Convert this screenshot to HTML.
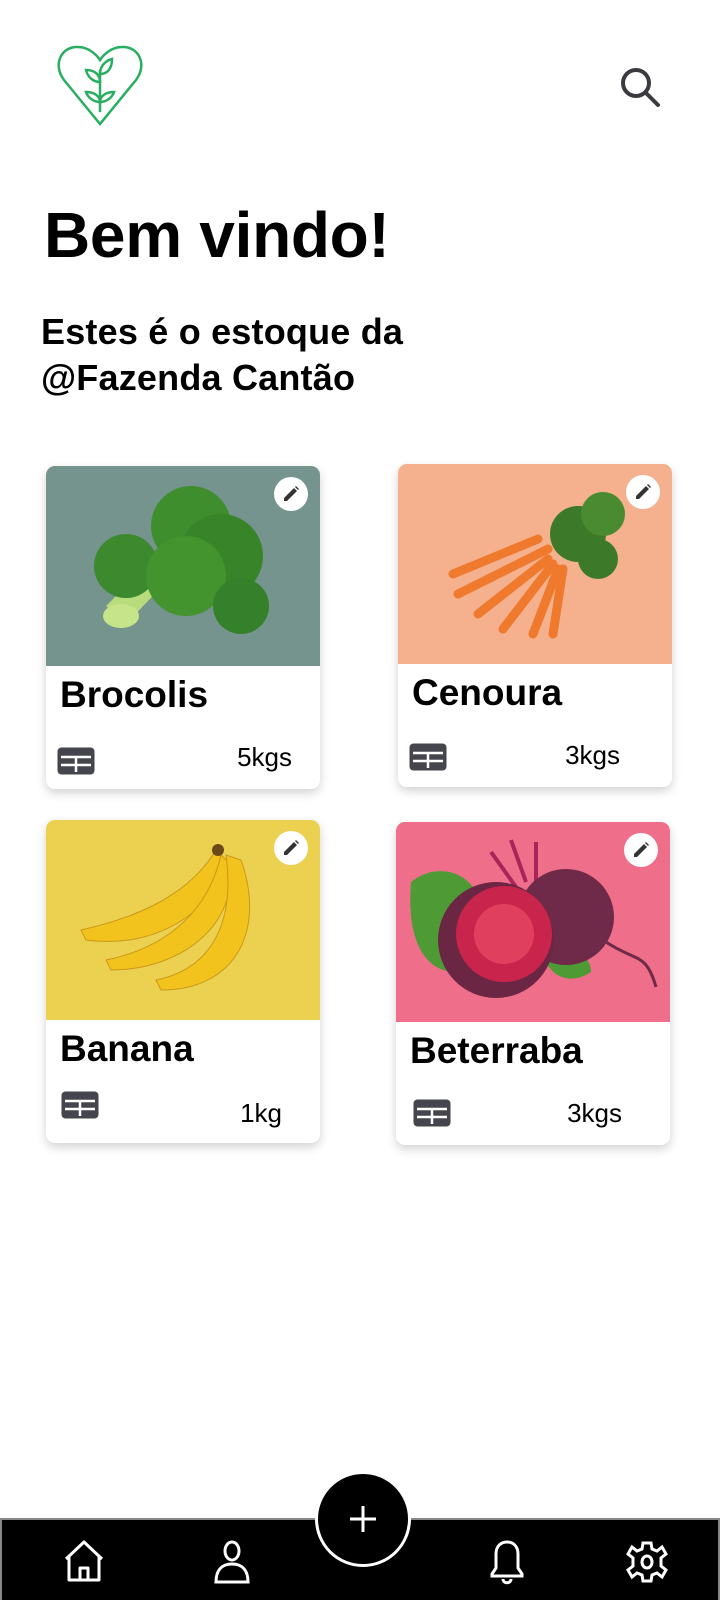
<!DOCTYPE html>
<html><head><meta charset="utf-8"><style>
*{margin:0;padding:0;box-sizing:border-box}
body{width:720px;height:1600px;background:#fff;position:relative;overflow:hidden;font-family:"Liberation Sans",Arial,sans-serif;color:#000}
.a{position:absolute}
h1{position:absolute;left:44px;top:198px;font-size:64px;font-weight:bold;letter-spacing:-0.3px}
.sub{position:absolute;left:41px;top:309px;font-size:36px;font-weight:bold;line-height:46px;letter-spacing:0.2px}
.card{position:absolute;width:274px;height:323px;background:#fff;border-radius:9px;box-shadow:0 4px 10px rgba(0,0,0,.18);overflow:hidden}
.img{position:absolute;left:0;top:0;width:100%;height:200px}
.t{position:absolute;left:14px;top:208px;font-size:37px;font-weight:bold}
.w{position:absolute;right:28px;top:276px;font-size:26px}
.tb{position:absolute;left:10px;top:280px}
.pen{position:absolute;right:12px;top:11px;width:34px;height:34px;border-radius:50%;background:#fff}
</style></head><body>

<svg class="a" style="left:56px;top:44px" width="88" height="82" viewBox="0 0 88 82" fill="none" stroke="#27ae60" stroke-width="2.5">
<path d="M44 80 L8 36 C-4 20 6 2 22 3 C32 3 40 10 44 16 C48 10 56 3 66 3 C82 2 92 20 80 36 Z"/>
<path d="M44 68 V26"/><path d="M44 30 C44 20 52 16 56 15 C56 24 52 30 44 30Z"/><path d="M44 38 C38 38 32 34 30 26 C38 26 44 30 44 38Z"/>
<path d="M44 58 C38 58 32 54 30 48 C38 48 44 52 44 58Z"/><path d="M44 58 C50 58 56 54 58 48 C50 48 44 52 44 58Z"/>
</svg>

<svg class="a" style="left:618px;top:64px" width="46" height="46" viewBox="0 0 46 46" fill="none" stroke="#3a3a40" stroke-width="4" stroke-linecap="round"><circle cx="18" cy="19" r="13"/><path d="M28 29 L40 41"/></svg>

<h1>Bem vindo!</h1>
<div class="sub">Estes é o estoque da<br>@Fazenda Cantão</div>

<!-- Broccoli -->
<div class="card" style="left:46px;top:466px">
 <svg class="img" viewBox="0 0 274 200"><rect width="274" height="200" fill="#76948e"/>
 <path d="M60 140 L100 100 L118 118 L80 158 Z" fill="#b8dc7c"/>
 <circle cx="80" cy="100" r="32" fill="#3d8a2e"/><circle cx="145" cy="60" r="40" fill="#3f8e2e"/><circle cx="175" cy="90" r="42" fill="#388428"/><circle cx="140" cy="110" r="40" fill="#43932f"/><circle cx="195" cy="140" r="28" fill="#35802a"/>
 <ellipse cx="75" cy="150" rx="18" ry="12" fill="#c6e48a"/></svg>
 <div class="pen"><svg width="34" height="34" viewBox="0 0 34 34"><path d="M10 24 L10 21 L20 11 L23 14 L13 24Z M21 10 L22 9 L25 12 L24 13Z" fill="#333"/></svg></div>
 <div class="t">Brocolis</div>
 <svg class="tb" width="40" height="30" viewBox="0 0 40 30"><rect x="1.5" y="1.5" width="37" height="27" rx="4" fill="#45454d"/><path d="M5 11 H35 M5 19 H35 M20 11 V26" stroke="#fff" stroke-width="2.5"/></svg>
 <div class="w">5kgs</div>
</div>

<!-- Carrot -->
<div class="card" style="left:398px;top:464px">
 <svg class="img" viewBox="0 0 274 200"><rect width="274" height="200" fill="#f5b18e"/>
 <g stroke="#ef7a2e" stroke-width="9" stroke-linecap="round"><path d="M55 110 L140 75"/><path d="M60 130 L150 85"/><path d="M80 150 L150 95"/><path d="M105 165 L155 100"/><path d="M135 170 L160 105"/><path d="M155 170 L165 105"/></g>
 <circle cx="180" cy="70" r="28" fill="#3c7a2a"/><circle cx="205" cy="50" r="22" fill="#4a8a30"/><circle cx="200" cy="95" r="20" fill="#3c7a2a"/></svg>
 <div class="pen"><svg width="34" height="34" viewBox="0 0 34 34"><path d="M10 24 L10 21 L20 11 L23 14 L13 24Z M21 10 L22 9 L25 12 L24 13Z" fill="#333"/></svg></div>
 <div class="t">Cenoura</div>
 <svg class="tb" width="40" height="30" viewBox="0 0 40 30" style="top:278px"><rect x="1.5" y="1.5" width="37" height="27" rx="4" fill="#45454d"/><path d="M5 11 H35 M5 19 H35 M20 11 V26" stroke="#fff" stroke-width="2.5"/></svg>
 <div class="w" style="right:52px">3kgs</div>
</div>

<!-- Banana -->
<div class="card" style="left:46px;top:820px">
 <svg class="img" viewBox="0 0 274 200"><rect width="274" height="200" fill="#ecd050"/>
 <g fill="#f2c31c" stroke="#c9981a" stroke-width="1"><path d="M35 110 C80 100 140 80 170 30 L180 40 C170 90 110 130 40 120Z"/><path d="M60 140 C110 130 160 100 175 35 L185 45 C190 110 130 150 65 150Z"/><path d="M110 160 C160 150 190 110 180 35 L195 40 C220 110 190 170 115 170Z"/></g>
 <circle cx="172" cy="30" r="6" fill="#6b4a1a"/></svg>
 <div class="pen"><svg width="34" height="34" viewBox="0 0 34 34"><path d="M10 24 L10 21 L20 11 L23 14 L13 24Z M21 10 L22 9 L25 12 L24 13Z" fill="#333"/></svg></div>
 <div class="t">Banana</div>
 <svg class="tb" width="40" height="30" viewBox="0 0 40 30" style="left:14px;top:270px"><rect x="1.5" y="1.5" width="37" height="27" rx="4" fill="#45454d"/><path d="M5 11 H35 M5 19 H35 M20 11 V26" stroke="#fff" stroke-width="2.5"/></svg>
 <div class="w" style="right:38px;top:278px">1kg</div>
</div>

<!-- Beet -->
<div class="card" style="left:396px;top:822px">
 <svg class="img" viewBox="0 0 274 200"><rect width="274" height="200" fill="#ef6f8a"/>
 <path d="M15 60 C40 40 70 50 80 70 L60 150 C30 150 10 120 15 60Z" fill="#4e9a35"/>
 <path d="M150 140 C170 120 195 130 195 150 C180 160 160 160 150 140Z" fill="#4e9a35"/>
 <g stroke="#a8245a" stroke-width="4"><path d="M120 65 L95 30"/><path d="M130 60 L115 18"/><path d="M140 60 L140 20"/></g>
 <circle cx="170" cy="95" r="48" fill="#6e2a48"/>
 <path d="M210 120 C240 140 250 130 260 165" stroke="#6e2a48" stroke-width="3" fill="none"/>
 <circle cx="100" cy="118" r="58" fill="#6a2642"/><circle cx="108" cy="112" r="48" fill="#c8244c"/><circle cx="108" cy="112" r="30" fill="#e0405e"/></svg>
 <div class="pen"><svg width="34" height="34" viewBox="0 0 34 34"><path d="M10 24 L10 21 L20 11 L23 14 L13 24Z M21 10 L22 9 L25 12 L24 13Z" fill="#333"/></svg></div>
 <div class="t">Beterraba</div>
 <svg class="tb" width="40" height="30" viewBox="0 0 40 30" style="left:16px;top:276px"><rect x="1.5" y="1.5" width="37" height="27" rx="4" fill="#45454d"/><path d="M5 11 H35 M5 19 H35 M20 11 V26" stroke="#fff" stroke-width="2.5"/></svg>
 <div class="w" style="right:48px">3kgs</div>
</div>

<!-- Nav -->
<div class="a" style="left:0;top:1518px;width:720px;height:82px;background:#000;border:2px solid #888;border-bottom:none"></div>
<div class="a" style="left:315px;top:1471px;width:96px;height:96px;border-radius:50%;background:#000;border:3px solid #fff"></div>
<svg class="a" style="left:348px;top:1504px" width="30" height="30" viewBox="0 0 30 30" stroke="#fff" stroke-width="3"><path d="M15 2 V28 M2 15 H28"/></svg>
<svg class="a" style="left:62px;top:1540px" width="44" height="44" viewBox="0 0 44 44" fill="none" stroke="#fff" stroke-width="3" stroke-linejoin="round"><path d="M4 19 L22 2 L40 19 M7 16 V40 H37 V16 M18 40 V28 H26 V40"/></svg>
<svg class="a" style="left:212px;top:1540px" width="40" height="44" viewBox="0 0 40 44" fill="none" stroke="#fff" stroke-width="3"><ellipse cx="20" cy="11" rx="7" ry="9"/><path d="M4 42 C4 30 10 24 20 24 C30 24 36 30 36 42 Z"/></svg>
<svg class="a" style="left:486px;top:1540px" width="42" height="46" viewBox="0 0 42 46" fill="none" stroke="#fff" stroke-width="3"><path d="M10 28 V14 C10 6 15 2 21 2 C27 2 32 6 32 14 V28 L36 34 V36 H6 V34 Z"/><path d="M17 39 C17 44 25 44 25 39"/></svg>
<svg class="a" style="left:626px;top:1540px" width="42" height="44" viewBox="0 0 42 44" fill="none" stroke="#fff" stroke-width="3"><path d="M17 3 H25 L26 9 L31 11 L36 7 L40 14 L35 18 V26 L40 30 L36 37 L31 33 L26 35 L25 41 H17 L16 35 L11 33 L6 37 L2 30 L7 26 V18 L2 14 L6 7 L11 11 L16 9 Z"/><ellipse cx="21" cy="22" rx="5" ry="6"/></svg>
</body></html>
